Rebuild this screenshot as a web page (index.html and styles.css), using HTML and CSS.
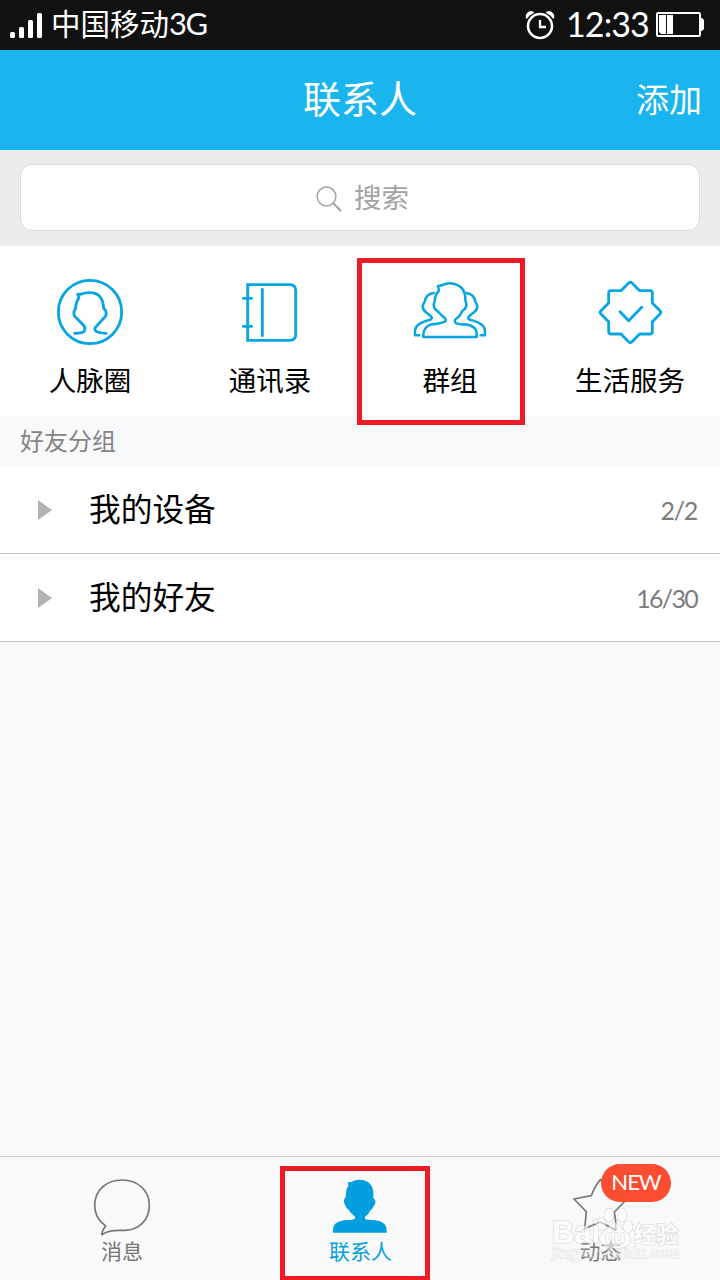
FILE: index.html
```html
<!DOCTYPE html>
<html lang="zh-CN">
<head>
<meta charset="UTF-8">
<title>联系人</title>
<link rel="stylesheet" href="styles.css">
</head>
<body>
<div class="screen">
  <div class="status">
    <svg class="signal" width="34" height="28" viewBox="0 0 34 28"><rect x="0" y="20" width="5" height="6" rx="1.5"/><rect x="9" y="15" width="5" height="11" rx="1.5"/><rect x="18" y="8" width="5" height="18" rx="1.5"/><rect x="27" y="1" width="5" height="25" rx="1.5"/></svg>
    <span class="carrier">中国移动<span class="net">3G</span></span>
    <svg class="alarm" width="30" height="30" viewBox="0 0 30 30"><circle cx="15" cy="16" r="12" fill="none" stroke="#fff" stroke-width="2.5"/><path d="M15 10v7h6" fill="none" stroke="#fff" stroke-width="2.3"/><path d="M1.5 8.5C0 3 5 0 9 2.5Q4 4.500 1.500 8.500M28.500 8.500C30 3 25 0 21 2.500Q26 4.500 28.500 8.500" fill="#fff" stroke="#fff"/></svg>
    <span class="clock">12:33</span>
    <svg class="battery" width="48" height="26" viewBox="0 0 48 26"><rect x="1" y="1" width="43" height="23" rx="1" fill="none" stroke="#fff" stroke-width="2"/><path d="M3 3h7v19H5l-2-2zM11 3h6v19h-6zM45 6h1l2 2v9l-2 2h-1z" fill="#fff"/></svg>
  </div>
  <header class="header"><h1 class="title">联系人</h1><span class="add">添加</span></header>
  <div class="search-area"><div class="search">
    <svg width="28" height="28" viewBox="0 0 28 28"><circle cx="11.5" cy="11.5" r="9.4"/><path d="M18 18l8 8" stroke-width="2.3"/></svg><span>搜索</span>
  </div></div>
  <nav class="shortcuts">
    <div class="shortcut">
      <svg class="icon" viewBox="60 36 240 240"><circle cx="180" cy="156" r="95"/><path d="M134 220Q159 220 163 213Q168 203 160 195L140 175C131 170 128 157 136 147C138 131 140 121 147 114L143 103Q149 103 155 102Q166 97 181 98C205 98 219 113 221 145C232 153 231 168 219 177L199 199Q192 206 196 212Q202 219 228 220"/></svg>
      <span>人脉圈</span>
    </div>
    <div class="shortcut">
      <svg class="icon" viewBox="60 36 240 240"><path stroke-linejoin="miter" d="M113 74H240Q256 75 257 90V226Q256 240 240 241H113Z"/><path d="M157 88V227M100 115H125M100 199H125"/></svg>
      <span>通讯录</span>
    </div>
    <div class="shortcut">
      <svg class="icon group" viewBox="180 66 240 240"><path d="M267 107Q277 107 285 102Q300 98 313 102Q347 110 346 151Q355 173 337 183Q329 201 317 207Q311 215 319 220Q330 224 343 223Q381 227 380 252V261H220V252Q222 230 244 223Q273 221 286 214Q290 206 278 199L261 182Q246 173 254 153Q255 132 267 122L264 108Z"/><path d="M251 129Q228 132 224 155Q211 174 228 187L243 199Q249 205 241 209Q195 219 195 244V256H208M349 129Q372 132 376 155Q389 174 372 187L357 199Q351 205 359 209Q405 219 405 244V256H392"/></svg>
      <span>群组</span>
    </div>
    <div class="shortcut">
      <svg class="icon" viewBox="90 36 240 240"><path d="M206 69Q211 64 216 69L239 92H270Q277 92 277 99V129L300 152Q305 157 300 162L277 185V215Q277 222 270 222H239L216 245Q211 250 206 245L183 222H153Q146 222 146 215V185L123 162Q118 157 123 152L146 129V99Q146 92 153 92H183Z"/><path d="M180 155L206 182L245 142"/></svg>
      <span>生活服务</span>
    </div>
    <div class="mark mark-group"></div>
  </nav>
  <div class="section">好友分组</div>
  <div class="row"><i class="arrow"></i><span class="name">我的设备</span><span class="count">2/2</span></div>
  <div class="row"><i class="arrow"></i><span class="name">我的好友</span><span class="count thirty">16/30</span></div>
  <main class="blank"></main>
  <footer class="tabs">
    <div class="tab message">
      <svg class="tab-icon" viewBox="30 78 240 180"><path d="M95 254Q96 242 107 228C86 213 73 190 74 162C77 118 111 90 156 90C204 90 238 122 238 166C238 212 205 240 166 241C140 242 123 237 95 254Z"/></svg>
      <span>消息</span>
    </div>
    <div class="tab active">
      <svg class="tab-icon solid" viewBox="150 78 240 180"><path d="M233 96Q244 98 251 92Q284 83 301 103Q312 116 310 143Q322 154 311 168Q307 178 302 180Q297 192 285 200V207Q291 210 309 210C338 212 350 223 350 241V248H189V240C189 220 204 212 232 210Q249 210 255 206V200Q241 190 235 178Q229 177 224 162Q218 150 227 142Q227 117 235 108Z"/></svg>
      <span>联系人</span>
    </div>
    <div class="tab">
      <svg class="tab-icon" viewBox="60 78 240 180"><path d="M182 88Q166 105 154 137L102 147L139 185L134 236L180 216L228 240Q228 210 223 186L258 150L207 137Z"/></svg>
      <span>动态</span>
    </div>
    <div class="badge">NEW</div>
    <div class="mark mark-tab"></div>
    <svg class="watermark" width="140" height="70" viewBox="0 0 140 70">
      <g class="paw"><ellipse cx="49" cy="23" rx="4.5" ry="6"/><ellipse cx="57" cy="14" rx="4.500" ry="6.500"/><ellipse cx="70" cy="14" rx="4.500" ry="6.500"/><ellipse cx="76" cy="26" rx="4.500" ry="6"/><path d="M49 41C45 33 54 31 58 25Q63 19 68 25C71 31 81 34 78 42C74 49 53 49 49 41Z"/></g>
      <text class="wm-main" x="0" y="42" textLength="48">Bai</text><text class="wm-du" x="53" y="42" textLength="20">du</text><text class="wm-main wm-cn" x="82" y="41" textLength="44">经验</text>
      <text class="wm-url" x="0" y="57" textLength="127">jingyan.baidu.com</text>
    </svg>
  </footer>
</div>
</body>
</html>
```

FILE: styles.css
```css
* { box-sizing: border-box; }
body { margin: 0; }
.screen {
  width: 720px; height: 1280px; overflow: hidden;
  display: flex; flex-direction: column;
  background: #f8f9fb; color: #000;
  font-family: Lato, "Noto Sans CJK SC", sans-serif;
  font-weight: 400;
}
.status { height: 50px; flex: none; display: flex; align-items: center; background: #111; color: #fff; padding: 0 16px 0 10px; }
.signal { fill: #fff; margin-top: 1px; }
.carrier { font-size: 29.5px; line-height: 48px; margin: -3px 0 0 7px; white-space: nowrap; }
.net { font-size: 31px; letter-spacing: -1.5px; }
.alarm { margin-left: auto; margin-top: -1px; }
.clock { font-size: 34px; line-height: 48px; width: 84px; margin: -2px 6px 0 11px; letter-spacing: -.9px; white-space: nowrap; }
.header { height: 100px; flex: none; display: grid; grid-template-columns: 1fr auto 1fr; align-items: center; padding-right: 18px; background: #1ab4ef; color: #fff; }
.title { grid-column: 2; margin: -5px 0 0 18px; font-size: 38px; line-height: 60px; font-weight: 400; }
.add { justify-self: end; font-size: 33px; line-height: 50px; margin-top: -3px; }
.search-area { height: 96px; flex: none; background: #ebecee; padding: 14px 20px 15px; }
.search { height: 67px; display: flex; justify-content: center; align-items: center; gap: 11px; background: #fff; border: 1px solid #d9dadc; border-radius: 12px; color: #a3a3a3; font-size: 27.5px; padding-left: 4px; }
.search span { margin-top: 1px; line-height: 44px; }
.search svg { fill: none; stroke: #a6a6a6; stroke-width: 1.5; margin-top: 3px; }
.shortcuts { height: 170px; flex: none; display: grid; grid-template-columns: repeat(4, 1fr); position: relative; background: #fff; }
.shortcut { display: flex; flex-direction: column; align-items: center; padding-top: 26px; font-size: 27.5px; line-height: 40px; }
.shortcut span { margin-top: 9px; }
.icon { width: 80px; height: 80px; fill: none; stroke: #07a5e1; stroke-width: 8.5; stroke-linecap: round; stroke-linejoin: round; }
.group { stroke-width: 7.5; }
.mark { position: absolute; border: 5px solid #ed1c24; z-index: 2; }
.mark-group { left: 357px; top: 12px; width: 168px; height: 167px; }
.section { height: 50px; flex: none; padding-left: 20px; line-height: 49px; font-size: 24px; color: #858585; }
.row { height: 88px; flex: none; display: flex; align-items: center; background: #fff; border-bottom: 1px solid #c8c8ca; padding: 0 23px 0 38px; }
.arrow { border-left: 14px solid #b2b2b2; border-top: 10px solid transparent; border-bottom: 10px solid transparent; margin-top: 1px; }
.name { font-size: 31.7px; line-height: 50px; margin: -2px auto 0 37px; }
.count { font-size: 25px; color: #7d7d7d; letter-spacing: -1.3px; }
.thirty { letter-spacing: -1.7px; }
.blank { flex: 1; }
.tabs { height: 124px; flex: none; display: grid; grid-template-columns: repeat(3, 1fr); position: relative; background: #f9f9f9; border-top: 1px solid #c8c8c8; }
.tab { display: flex; flex-direction: column; align-items: center; padding-top: 19px; color: #777; font-size: 21px; line-height: 30px; }
.tab span { margin-left: 1px; }
.message span { margin-left: 4px; }
.tab-icon { width: 80px; height: 60px; fill: none; stroke: #787878; stroke-width: 5; stroke-linejoin: round; }
.solid { fill: #049fe1; stroke: none; }
.active { color: #08a0df; }
.mark-tab { left: 280px; top: 9px; width: 150px; height: 115px; }
.badge { position: absolute; left: 601px; top: 7px; width: 70px; height: 38px; border-radius: 19px; background: #fa4d31; color: #fff; font-size: 22px; line-height: 36px; text-align: center; letter-spacing: -1px; }
.watermark { position: absolute; left: 552px; top: 44px; overflow: visible; font-family: "Liberation Sans", "Noto Sans CJK SC", sans-serif; fill: #fff; stroke: #ccc; stroke-width: 1.5; paint-order: stroke; opacity: .6; }
.wm-main { font-size: 31px; font-weight: 700; }
.wm-cn { font-size: 22px; }
.wm-du { font-size: 18px; font-weight: 700; }
.wm-url { font-size: 15px; opacity: .7; }
```
